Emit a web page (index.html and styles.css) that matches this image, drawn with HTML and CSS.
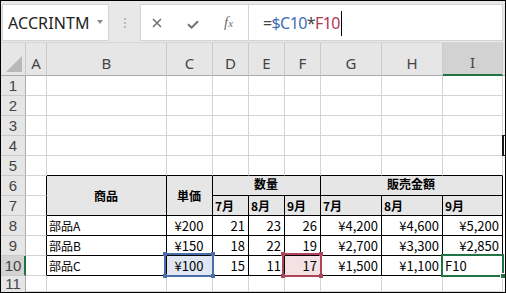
FILE: index.html
```html
<!DOCTYPE html>
<html lang="ja">
<head>
<meta charset="utf-8">
<title>Excel</title>
<link rel="stylesheet" href="styles.css">
</head>
<body>
<div class="window">
  <div class="topbar">
    <div class="namebox"><span class="name">ACCRINTM</span><span class="dd"></span></div>
    <div class="grip"><i></i><i></i><i></i></div>
    <div class="fbar">
      <div class="fbtns">
        <svg class="ic-x" width="10" height="10" viewBox="0 0 10 10"><path d="M1 1L9 9M9 1L1 9" fill="none" stroke="#737373" stroke-width="1.6"/></svg>
        <svg class="ic-ok" width="12" height="9" viewBox="0 0 12 9"><path d="M1 4.2L4.6 7.6L11 1.2" fill="none" stroke="#737373" stroke-width="2"/></svg>
        <span class="fx">f<span class="fxx">x</span></span>
      </div>
      <div class="finput"><span class="op">=</span><span class="r1">$C10</span><span class="op">*</span><span class="r2">F10</span><span class="cursor"></span></div>
    </div>
  </div>
  <div class="sheet">
    <div class="h corner"><svg width="16" height="16" viewBox="0 0 16 16"><path d="M16 0V16H0Z" fill="#b9b9b9"/></svg></div>
    <div class="h">A</div><div class="h">B</div><div class="h">C</div><div class="h">D</div><div class="h">E</div><div class="h">F</div><div class="h">G</div><div class="h">H</div><div class="h hsel">I</div><div class="hf"></div>

    <div class="rh">1</div><div class="c"></div><div class="c"></div><div class="c"></div><div class="c"></div><div class="c"></div><div class="c"></div><div class="c"></div><div class="c"></div><div class="c"></div><div class="f"></div>
    <div class="rh">2</div><div class="c"></div><div class="c"></div><div class="c"></div><div class="c"></div><div class="c"></div><div class="c"></div><div class="c"></div><div class="c"></div><div class="c"></div><div class="f"></div>
    <div class="rh">3</div><div class="c"></div><div class="c"></div><div class="c"></div><div class="c"></div><div class="c"></div><div class="c"></div><div class="c"></div><div class="c"></div><div class="c"></div><div class="f"></div>
    <div class="rh">4</div><div class="c"></div><div class="c"></div><div class="c"></div><div class="c"></div><div class="c"></div><div class="c"></div><div class="c"></div><div class="c"></div><div class="c"></div><div class="f"></div>
    <div class="rh">5</div><div class="c"></div><div class="c bb"></div><div class="c bb"></div><div class="c bb"></div><div class="c bb"></div><div class="c bb"></div><div class="c bb"></div><div class="c bb"></div><div class="c bb"></div><div class="f"></div>

    <div class="rh">6</div><div class="c br"></div>
    <div class="c t th jp ctr span-r2">商品</div>
    <div class="c t th jp ctr span-r2">単価</div>
    <div class="c t th jp ctr top span-c3">数量</div>
    <div class="c t th jp ctr top span-c3">販売金額</div>
    <div class="f"></div>

    <div class="rh">7</div><div class="c br"></div>
    <div class="c t th jp">7月</div><div class="c t th jp">8月</div><div class="c t th jp">9月</div><div class="c t th jp">7月</div><div class="c t th jp">8月</div><div class="c t th jp">9月</div>
    <div class="f"></div>

    <div class="rh">8</div><div class="c br"></div>
    <div class="c t jp">部品A</div><div class="c t ctr">¥200</div><div class="c t num">21</div><div class="c t num">23</div><div class="c t num">26</div><div class="c t num">¥4,200</div><div class="c t num">¥4,600</div><div class="c t num">¥5,200</div>
    <div class="f"></div>

    <div class="rh">9</div><div class="c br"></div>
    <div class="c t jp">部品B</div><div class="c t ctr">¥150</div><div class="c t num">18</div><div class="c t num">22</div><div class="c t num">19</div><div class="c t num">¥2,700</div><div class="c t num">¥3,300</div><div class="c t num">¥2,850</div>
    <div class="f"></div>

    <div class="rh rhsel">10</div><div class="c br"></div>
    <div class="c t jp">部品C</div>
    <div class="c t ctr ref-blue">¥100<span class="box box-blue"><i class="k tl"></i><i class="k tr"></i><i class="k bl"></i><i class="k brr"></i></span></div>
    <div class="c t num">15</div><div class="c t num">11</div>
    <div class="c t num ref-red">17<span class="box box-red"><i class="k tl"></i><i class="k tr"></i><i class="k bl"></i><i class="k brr"></i></span></div>
    <div class="c t num">¥1,500</div><div class="c t num">¥1,100</div>
    <div class="c t active">F10<span class="box box-green"><i class="handle"></i></span></div>
    <div class="f"></div>

    <div class="rh last">11</div><div class="c"></div><div class="c"></div><div class="c"></div><div class="c"></div><div class="c"></div><div class="c"></div><div class="c"></div><div class="c"></div><div class="c"></div><div class="f"></div>

    <div class="bracket"></div>
  </div>
</div>
</body>
</html>
```

FILE: styles.css
```css
* { box-sizing: border-box; }
html, body { margin: 0; padding: 0; background: #fff; }
.window {
  width: 506px;
  height: 293px;
  border: 1px solid #000;
  background: #e8e8e8;
  overflow: hidden;
  font-family: "Noto Sans", "Liberation Sans", sans-serif;
}
.topbar {
  height: 42px;
  display: flex;
  padding: 3px 0 0 1px;
  border-bottom: 1px solid #d6d6d6;
}
.namebox {
  width: 107px;
  height: 37px;
  background: #fff;
  border: 1px solid #d4d4d4;
  position: relative;
  display: flex;
  align-items: center;
  padding-left: 5px;
}
.name {
  font-size: 16px;
  color: #222;
  letter-spacing: 0.1px;
}
.dd {
  position: absolute;
  left: 94px;
  top: 15px;
  width: 0;
  height: 0;
  border-left: 3px solid transparent;
  border-right: 3px solid transparent;
  border-top: 4px solid #8a8a8a;
}
.grip {
  width: 31px;
  height: 37px;
  display: flex;
  flex-direction: column;
  align-items: center;
  justify-content: center;
  gap: 2px;
}
.grip i {
  display: block;
  width: 2px;
  height: 2px;
  background: #b8b8b8;
}
.fbar {
  width: 363px;
  height: 37px;
  background: #fff;
  border: 1px solid #d4d4d4;
  display: flex;
}
.fbtns {
  width: 108px;
  flex: none;
  border-right: 1px solid #d4d4d4;
  display: flex;
  align-items: center;
  position: relative;
}
.ic-x { margin-left: 11px; }
.ic-ok { margin-left: 25px; margin-top: 3px; }
.fx {
  margin-left: 25px;
  font-family: "Liberation Serif", serif;
  font-style: italic;
  font-size: 15px;
  color: #6f6f6f;
  margin-top: -1px;
}
.fxx { font-size: 11px; }
.finput {
  flex: 1;
  display: flex;
  align-items: center;
  padding-left: 14px;
  font-size: 16px;
  letter-spacing: -0.6px;
  position: relative;
}
.op { color: #444; }
.r1 { color: #3d6eb4; }
.r2 { color: #b3374e; }
.cursor {
  display: block;
  width: 1px;
  height: 25px;
  background: #000;
  margin-left: 1px;
  margin-top: 1px;
}

.sheet {
  position: relative;
  display: grid;
  grid-template-columns: 25px 21px 120px 46px 36px 36px 36px 61px 61px 60px 2px;
  grid-template-rows: 33px repeat(10, 20px) 16px;
  background: #fff;
}
.h {
  background: #e6e6e6;
  border-right: 1px solid #cacaca;
  border-bottom: 1px solid #ababab;
  display: flex;
  align-items: flex-end;
  justify-content: center;
  padding-bottom: 2px;
  font-size: 15px;
  line-height: 20px;
  color: #444;
}
.corner {
  justify-content: flex-end;
  padding: 0 3px 3px 0;
}
.corner svg { display: block; }
.hsel {
  background: #d2d2d2;
  border-bottom: 2px solid #217346;
}
.hf { background: #e6e6e6; border-bottom: 1px solid #ababab; }
.rh {
  background: #e6e6e6;
  border-right: 1px solid #ababab;
  border-bottom: 1px solid #cacaca;
  font-family: "Liberation Sans", sans-serif;
  font-size: 15px;
  line-height: 19px;
  text-align: center;
  color: #444;
}
.rh.last { line-height: 16px; border-bottom: 0; }
.rhsel {
  background: #d2d2d2;
  border-right: 2px solid #217346;
  padding-left: 1px;
}
.c {
  border-right: 1px solid #d4d4d4;
  border-bottom: 1px solid #d4d4d4;
  font-family: "Noto Sans CJK JP", "Noto Sans", sans-serif;
  font-size: 13px;
  line-height: 19px;
  color: #000;
  padding: 0 3px 0 2px;
  white-space: nowrap;
}
.jp { font-size: 12px; }
.f { background: #fff; }
.bb { border-bottom-color: #000; }
.br { border-right-color: #000; }
.t { border-right-color: #000; border-bottom-color: #000; }
.th { background: #e7e6e6; font-weight: bold; }
.ctr { text-align: center; }
.num { text-align: right; }
.span-r2 {
  grid-row: span 2;
  display: flex;
  align-items: center;
  justify-content: center;
}
.span-c3 { grid-column: span 3; }
.top { line-height: 16px; }

.ref-blue, .ref-red, .active { position: relative; }
.ref-blue { background: #dfe7f3; }
.ref-red { background: #f4e1e4; }
.box {
  position: absolute;
  left: -3px;
  top: -3px;
  right: -2px;
  bottom: -2px;
  border: 2px solid;
}
.box-blue { border-color: #4a6fa8; }
.box-red { border-color: #b0445a; }
.box-green {
  border-color: #217346;
  left: -2px;
  top: -2px;
  right: -2px;
  bottom: -2px;
}
.k {
  position: absolute;
  width: 4px;
  height: 4px;
}
.box-blue .k { background: #4a6fa8; }
.box-red .k { background: #b0445a; }
.k.tl { left: -3px; top: -3px; }
.k.tr { right: -3px; top: -3px; }
.k.bl { left: -3px; bottom: -3px; }
.k.brr { right: -3px; bottom: -3px; }
.handle {
  position: absolute;
  right: -4px;
  bottom: -4px;
  width: 6px;
  height: 6px;
  background: #217346;
  border: 1px solid #fff;
}
.bracket {
  position: absolute;
  left: 501px;
  top: 92px;
  width: 4px;
  height: 21px;
  border-left: 2px solid #1a1a1a;
  border-top: 1px solid #1a1a1a;
  border-bottom: 1px solid #1a1a1a;
}
```
